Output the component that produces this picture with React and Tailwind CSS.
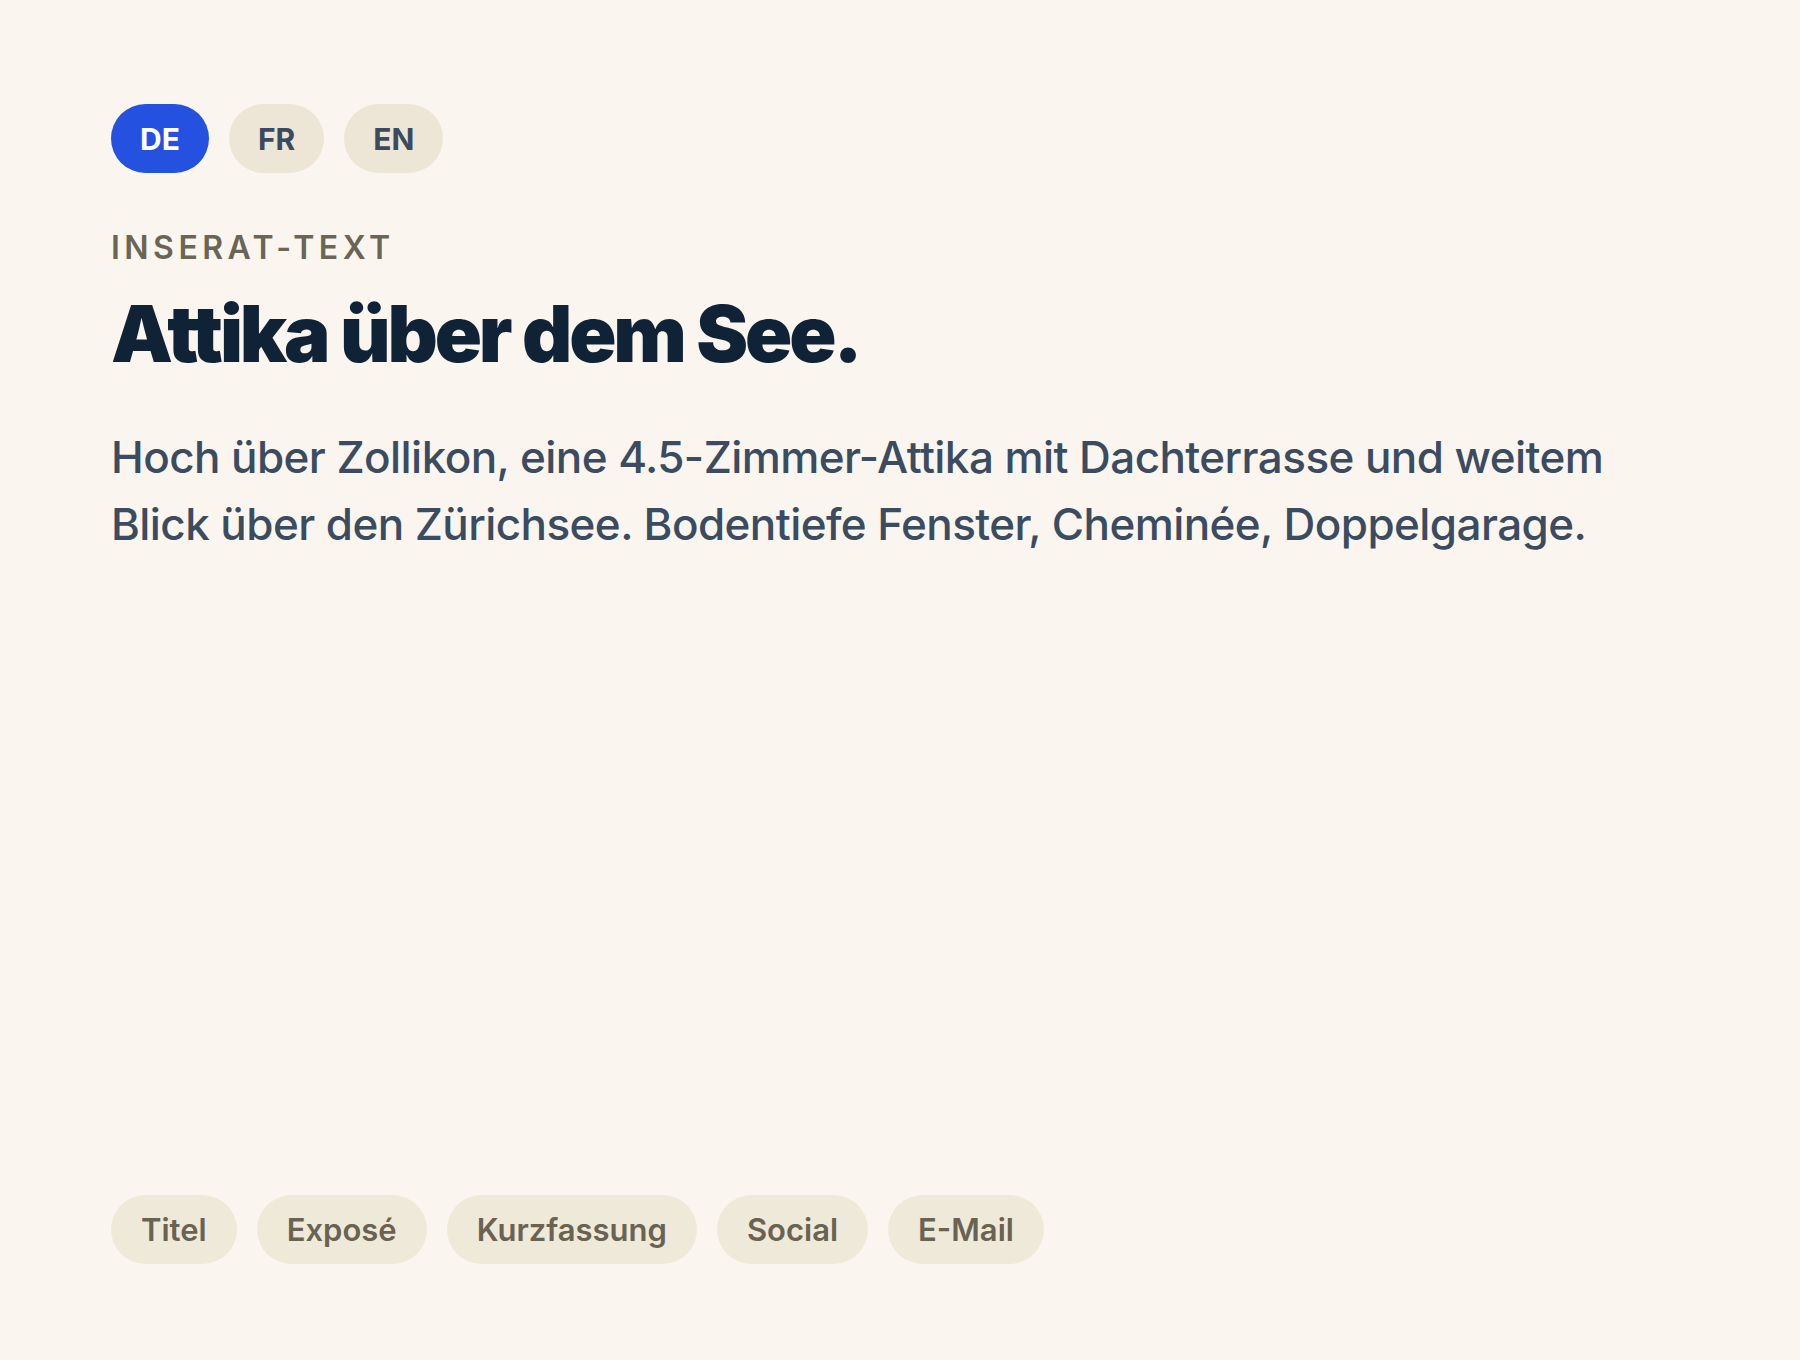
import React from "react";

const font = { fontFamily: "Inter, 'Noto Sans', sans-serif" };

export default function App() {
  const langs = ["DE", "FR", "EN"];
  const tags = ["Titel", "Exposé", "Kurzfassung", "Social", "E-Mail"];
  return (
    <div
      className="flex h-[1360px] w-full flex-col bg-[#faf6ef] pt-[104px] pb-[96px] px-[111px]"
      style={font}
    >
      <div className="flex gap-[20px]">
        {langs.map((l, i) => (
          <div
            key={l}
            className={
              i === 0
                ? "flex h-[69px] items-center rounded-full bg-[#2451e0] px-[29px] text-[30px] font-bold leading-none text-white"
                : "flex h-[69px] items-center rounded-full bg-[#ede6d6] px-[29px] text-[30px] font-bold leading-none text-[#3b4a5e]"
            }
          >
            {l}
          </div>
        ))}
      </div>

      <div className="mt-[59px] text-[32px] font-semibold uppercase leading-none tracking-[0.14em] text-[#6b6555]">
        Inserat-Text
      </div>

      <h1 className="mt-[31px] text-[78px] font-black leading-none tracking-[-0.04em] text-[#0f2236]">
        Attika über dem See.
      </h1>

      <p className="mt-[51px] text-[44px] font-medium leading-[67px] tracking-[-0.013em] text-[#3b4b60]">
        Hoch über Zollikon, eine 4.5-Zimmer-Attika mit Dachterrasse und weitem
        Blick über den Zürichsee. Bodentiefe Fenster, Cheminée, Doppelgarage.
      </p>

      <div className="mt-auto flex gap-[20px]">
        {tags.map((t) => (
          <div
            key={t}
            className="flex h-[69px] items-center rounded-full bg-[#efe9d9] px-[30px] text-[31px] font-semibold leading-none text-[#6a6252]"
          >
            {t}
          </div>
        ))}
      </div>
    </div>
  );
}
